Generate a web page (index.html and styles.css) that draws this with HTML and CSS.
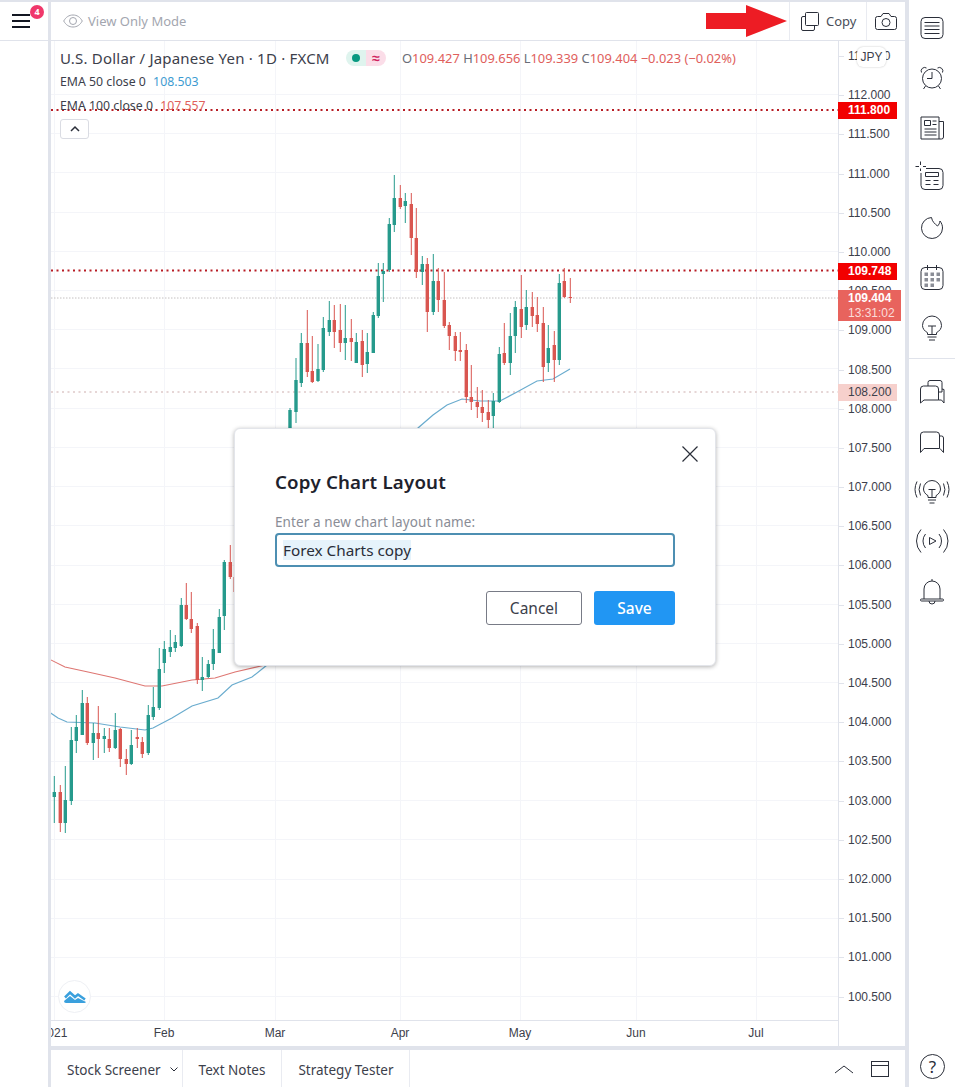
FILE: index.html
```html
<!DOCTYPE html>
<html lang="en">
<head>
    <meta charset="UTF-8">
    <meta name="viewport" content="width=device-width, initial-scale=1.0">
    <title>Forex Charts</title>
    <link rel="stylesheet" href="styles.css">
</head>
<body>
    <div class="app">
        <!-- Left rail with the menu button -->
        <div class="left-rail">
            <div class="menu-cell">
                <svg class="menu-icon" width="18" height="14" viewBox="0 0 18 14"><path d="M0 1h18M0 7h18M0 13h18"/></svg>
                <span class="menu-badge">4</span>
            </div>
        </div>

        <div class="center">
            <!-- Top toolbar -->
            <div class="toolbar">
                <div class="view-only">
                    <svg width="20" height="14" viewBox="0 0 20 14" class="eye"><path d="M.7 7C3 3 6 1 10 1s7 2 9.300 6c-2.300 4-5.300 6-9.300 6S3 11 .7 7z"/><circle cx="10" cy="7" r="3.500"/></svg>
                    <span>View Only Mode</span>
                </div>
                <svg class="red-arrow" width="81" height="32" viewBox="0 0 81 32"><path d="M0 8h40V0l41 16-41 16v-8H0z"/></svg>
                <div class="tool-btn copy-btn">
                    <svg width="18" height="19" viewBox="0 0 18 19" class="line-icon"><rect x="4.500" y=".5" width="13" height="13" rx="1"/><path d="M4.500 4.500H2A1.500 1.500 0 0 0 .5 6v11A1.500 1.500 0 0 0 2 18.500h10a1.500 1.500 0 0 0 1.500-1.500v-3"/></svg>
                    <span>Copy</span>
                </div>
                <div class="tool-btn camera-btn">
                    <svg width="22" height="17" viewBox="0 0 22 17" class="line-icon"><path d="M2.500 3.500H6L8 .5h6l2 3h3.500a2 2 0 0 1 2 2v9a2 2 0 0 1-2 2h-17a2 2 0 0 1-2-2v-9a2 2 0 0 1 2-2z"/><circle cx="11" cy="9.500" r="4"/></svg>
                </div>
            </div>

            <!-- Chart and price scale -->
            <div class="chart-row">
                <div class="chart-pane">
                    <svg class="chart" width="787" height="979" viewBox="51 41 787 979">
                        <!-- grid -->
                        <path class="grid" d="M51 94.500H838M51 133.500H838M51 172.500H838M51 212.500H838M51 251.500H838M51 290.500H838M51 329.500H838M51 368.500H838M51 408.500H838M51 447.500H838M51 486.500H838M51 525.500H838M51 565.500H838M51 604.500H838M51 643.500H838M51 682.500H838M51 722.500H838M51 761.500H838M51 800.500H838M51 839.500H838M51 879.500H838M51 918.500H838M51 957.500H838M51 996.500H838"/>
                        <path class="grid" d="M54.500 41V1020M164.500 41V1020M275.500 41V1020M400.500 41V1020M520.500 41V1020M636.500 41V1020M756.500 41V1020"/>
                        <!-- horizontal levels -->
                        <path class="level level-red" d="M51 110H838M51 270.500H838"/>
                        <path class="level level-last" d="M51 298H838"/>
                        <path class="level level-soft" d="M51 392H838"/>
                        <!-- EMA lines -->
                        <polyline class="ema ema-blue" points="49,712 58,718 67,722 95,723 120,727 145,730 153,728 172,718 192,706 218,698 232,685 252,677 267,665 418,428 433,415 447,405 462,399 480,401 500,401 517,392 537,381 553,379 570,369"/>
                        <polyline class="ema ema-red" points="49,659 65,667 88,672 115,678 145,686 162,686 192,680 215,678 235,672 265,665"/>
                        <!-- candles: wicks then bodies, up and down -->
                        <path class="wick up" d="M54.300 776V823M65.300 766V833M71.300 727V805M76.300 715V753M82.300 690V735M93.300 723V760M104.300 728V753M115.300 713V749M131.300 730V765M148.300 705V755M153.300 687V720M159.300 648V710M164.300 641V673M170.300 630V657M175.300 635V652M181.300 598V647M202.300 657V691M208.300 660V678M213.300 629V670M219.300 609V653M224.300 560V630M290 408V430M296 358V423M301.300 333V387M318 344V382M323.300 317V372M329.300 301V336M345.300 305V360M356.300 333V363M367.300 333V373M373.300 312V353M378.300 263V318M383.300 263V302M389.300 218V272M394.300 175V232M405.300 193V223M422.300 256V285M433.300 254V315M493.300 393V428M499.300 347V403M510.300 313V375M515.300 301V353M526.300 290V330M548.300 325V372M559.300 274V365"/>
                        <path class="wick down" d="M60.300 785V832M87.300 697V745M98.300 706V758M109.300 728V752M120.300 728V767M126.300 749V775M137.300 728V748M142.300 737V758M186.300 583V620M191.300 592V633M197.300 623V684M230.300 545V579M234 577V592M307.300 310V377M312.300 336V383M334.300 305V348M340.300 304V352M351.300 319V361M362.300 330V377M400.300 185V209M411.300 193V255M416.300 208V278M427.300 258V332M438.300 268V312M444.300 272V328M449.300 322V350M455.300 332V361M460.300 332V361M466.300 344V403M471.300 365V410M477.300 387V418M482.300 390V422M488.300 400V428M504.300 323V365M521.300 275V338M532.300 292V327M537.300 297V332M543.300 307V382M554.300 331V382M564.300 268V298M570.300 278V303"/>
                        <path class="body up" d="M54.300 792V797M65.300 800V823M71.300 740V801M76.300 727V741M82.300 703V735M93.300 733V743M104.300 736V739M115.300 730V748M131.300 745V764M148.300 715V753M153.300 707V717M159.300 669V708M164.300 649V663M170.300 647V652M175.300 642V648M181.300 605V646M202.300 677V680M208.300 664V677M213.300 649V664M219.300 617V653M224.300 562V616M290 410V430M296 380V412M301.300 343V383M318 369V381M323.300 328V370M329.300 320V332M345.300 338V343M356.300 342V363M367.300 352V364M373.300 315V353M378.300 276V316M383.300 271V274M389.300 224V270M394.300 198V225M405.300 201V206M422.300 264V272M433.300 281V312M493.300 401V416M499.300 354V402M510.300 336V363M515.300 307V336M526.300 307V325M548.300 348V363M559.300 283V360"/>
                        <path class="body down" d="M60.300 792V823M87.300 703V743M98.300 733V739M109.300 739V748M120.300 729V759M126.300 759V764M137.300 737V739M142.300 742V754M186.300 605V619M191.300 619V629M197.300 626V680M230.300 562V577M307.300 343V372M312.300 371V382M334.300 320V332M340.300 330V343M351.300 338V342M362.300 341V365M400.300 198V207M411.300 204V238M416.300 238V272M427.300 264V312M438.300 281V300M444.300 300V326M449.300 325V336M455.300 336V351M460.300 350V352M466.300 350V397M471.300 397V402M477.300 402V407M482.300 407V413M488.300 412V420M504.300 353V363M521.300 309V327M532.300 307V316M537.300 315V324M543.300 323V367M554.300 345V360M564.300 281V297M570.300 297V298"/>
                    </svg>

                    <!-- Legend over the chart -->
                    <div class="legend">
                        <div class="legend-title">
                            <span class="symbol">U.S. Dollar / Japanese Yen · 1D · FXCM</span>
                            <span class="status">
                                <span class="status-open"><i></i></span>
                                <span class="status-delay">≈</span>
                            </span>
                            <span class="ohlc"><b>O</b>109.427 <b>H</b>109.656 <b>L</b>109.339 <b>C</b>109.404 −0.023 (−0.02%)</span>
                        </div>
                        <div class="legend-row">EMA 50 close 0 <span class="val-blue">108.503</span></div>
                        <div class="legend-row">EMA 100 close 0 <span class="val-red">107.557</span></div>
                        <button class="collapse-btn">
                            <svg width="10" height="6" viewBox="0 0 10 6"><path d="M1 5l4-4 4 4"/></svg>
                        </button>
                    </div>

                    <div class="tv-logo">
                        <svg width="22" height="13" viewBox="0 0 22 13"><path class="tv-logo-ridge" d="M1 7.500L6 2.500l5 4.500 3-2.500 7 5"/><path d="M0 11l6-5 5 4 3-2 8 4v0a2 2 0 0 1-2 1H2a2 2 0 0 1-2-2z"/></svg>
                    </div>

                    <div class="time-axis">
                        <span style="left:3px">2021</span>
                        <span style="left:113px">Feb</span>
                        <span style="left:224px">Mar</span>
                        <span style="left:349px">Apr</span>
                        <span style="left:469px">May</span>
                        <span style="left:585px">Jun</span>
                        <span style="left:705px">Jul</span>
                    </div>
                </div>

                <div class="price-axis">
                    <div class="prices">
                        <div class="price">112.500</div>
                        <div class="price">112.000</div>
                        <div class="price">111.500</div>
                        <div class="price">111.000</div>
                        <div class="price">110.500</div>
                        <div class="price">110.000</div>
                        <div class="price">109.500</div>
                        <div class="price">109.000</div>
                        <div class="price">108.500</div>
                        <div class="price">108.000</div>
                        <div class="price">107.500</div>
                        <div class="price">107.000</div>
                        <div class="price">106.500</div>
                        <div class="price">106.000</div>
                        <div class="price">105.500</div>
                        <div class="price">105.000</div>
                        <div class="price">104.500</div>
                        <div class="price">104.000</div>
                        <div class="price">103.500</div>
                        <div class="price">103.000</div>
                        <div class="price">102.500</div>
                        <div class="price">102.000</div>
                        <div class="price">101.500</div>
                        <div class="price">101.000</div>
                        <div class="price">100.500</div>
                    </div>
                    <div class="currency">JPY</div>
                    <div class="tag tag-high">111.800</div>
                    <div class="tag tag-mid">109.748</div>
                    <div class="tag tag-last">109.404<small>13:31:02</small></div>
                    <div class="tag tag-low">108.200</div>
                </div>
            </div>

            <!-- Bottom tabs -->
            <div class="bottom-bar">
                <div class="tab">Stock Screener
                    <svg width="8" height="5" viewBox="0 0 8 5" class="tab-caret"><path d="M.5.5L4 4 7.500.5"/></svg>
                </div>
                <div class="tab">Text Notes</div>
                <div class="tab">Strategy Tester</div>
                <div class="bottom-actions">
                    <svg width="20" height="10" viewBox="0 0 20 10" class="line-icon"><path d="M1 9l9-7 9 7"/></svg>
                    <svg width="18" height="16" viewBox="0 0 18 16" class="line-icon"><rect x=".5" y=".5" width="17" height="15"/><path d="M.5 4.500h17"/></svg>
                </div>
            </div>
        </div>

        <!-- Right rail icons -->
        <div class="right-rail">
            <div class="rail-group">
                <div class="rail-btn"><svg width="28" height="28" viewBox="0 0 28 28"><rect x="3" y="3.500" width="22" height="21" rx="4"/><path d="M6.500 8.500h15M6.500 12h15M6.500 15.500h15M6.500 19.500h15"/></svg></div>
                <div class="rail-btn"><svg width="28" height="28" viewBox="0 0 28 28"><circle cx="14" cy="14.500" r="9.500"/><path d="M14 8v6.500H9M3.500 8.500a3.500 3.500 0 0 1 5-4.500M24.500 8.500a3.500 3.500 0 0 0-5-4.500M7.500 22l-2 3M20.500 22l2 3"/></svg></div>
                <div class="rail-btn"><svg width="28" height="28" viewBox="0 0 28 28"><path d="M21 7.500h4.500V23a2 2 0 0 1-2 2H3V3h18v22"/><path d="M6.500 6.500h6v5h-6zM14.500 7h4M14.500 10.500h4M6.500 15h12M6.500 18h12M6.500 21h12"/></svg></div>
                <div class="rail-btn"><svg width="28" height="28" viewBox="0 0 28 28"><path d="M8 4.500h13a4 4 0 0 1 4 4v13a4 4 0 0 1-4 4H7a4 4 0 0 1-4-4V9"/><path d="M7.500 8.500h13v4h-13zM7.500 16.500h5M15.500 16.500h5M7.500 20.500h5M15.500 20.500h5M-2.500 2.500H1M5 2.500h3M2.500-2.500V1M2.500 4.500V7"/></svg></div>
                <div class="rail-btn"><svg width="28" height="28" viewBox="0 0 28 28"><path d="M13.500 3.500A10.500 10.500 0 1 0 24.500 14c0-2.500-.8-4.800-2.500-7-.5 2.500-1 3.500-2.500 5-2.500-2-5.500-4.500-6-8.500z"/></svg></div>
                <div class="rail-btn"><svg width="28" height="28" viewBox="0 0 28 28"><rect x="3" y="3.500" width="22" height="22" rx="4"/><path d="M9.500 1v5M18.500 1v5"/><g class="dots"><rect x="6.500" y="8.500" width="3.500" height="3.500"/><rect x="12.500" y="8.500" width="3.500" height="3.500"/><rect x="18.500" y="8.500" width="3.500" height="3.500"/><rect x="6.500" y="14" width="3.500" height="3.500"/><rect x="12.500" y="14" width="3.500" height="3.500"/><rect x="18.500" y="14" width="3.500" height="3.500"/><rect x="6.500" y="19.500" width="3.500" height="3.500"/><rect x="12.500" y="19.500" width="3.500" height="3.500"/></g></svg></div>
                <div class="rail-btn"><svg width="28" height="28" viewBox="0 0 28 28"><path d="M9.500 20.500v-1.800C6.500 17 4.500 14.500 4.500 11.500a9.500 9.500 0 0 1 19 0c0 3-2 5.500-5 7.200v1.800zM10 12h8M14 12v8.500M9.500 23h9M11 26h6"/></svg></div>
            </div>
            <div class="rail-group rail-group-lower">
                <div class="rail-btn"><svg width="28" height="28" viewBox="0 0 28 28"><path d="M6 23l-3.500 3V12a3 3 0 0 1 3-3h12a3 3 0 0 1 3 3v11z"/><path d="M10 9V5.500a2 2 0 0 1 2-2h10a2 2 0 0 1 2 2V15h-3.500M20.500 23h3l2.500 3V12.500l-2-.5"/></svg></div>
                <div class="rail-btn"><svg width="28" height="28" viewBox="0 0 28 28"><path d="M6 21.500l-3.500 4V8a3 3 0 0 1 3-3h13a3 3 0 0 1 3 3v13.500z"/><path d="M22 9h1.500a2 2 0 0 1 2 2v14.500l-3.500-4"/></svg></div>
                <div class="rail-btn"><svg width="28" height="28" viewBox="0 0 28 28"><path d="M10 20.500v-1.800c-2.700-1.600-4.500-4-4.500-6.700a8.500 8.500 0 0 1 17 0c0 2.700-1.800 5.100-4.500 6.700v1.800zM10.500 12.500h7M14 12.500v8M10 23h8M11.500 26h5M2.500 6.500a14 14 0 0 0 0 12M25.500 6.500a14 14 0 0 1 0 12M-1 4.500a18 18 0 0 0 0 16M29 4.500a18 18 0 0 1 0 16"/></svg></div>
                <div class="rail-btn"><svg width="28" height="28" viewBox="0 0 28 28"><path d="M11.500 10.500v7l6.500-3.500zM7.500 7a11 11 0 0 0 0 14M21 7a11 11 0 0 1 0 14M3 2.500a17 17 0 0 0 0 23M25.500 2.500a17 17 0 0 1 0 23"/></svg></div>
                <div class="rail-btn"><svg width="28" height="28" viewBox="0 0 28 28"><path d="M6 22V12a8 8 0 0 1 16 0v10M14 2v2M3.500 22h21a1 1 0 0 1 0 2h-21a1 1 0 0 1 0-2zM11 24a3 3 0 0 0 6 0"/></svg></div>
            </div>
            <div class="help">?</div>
        </div>

        <!-- Copy layout dialog -->
        <div class="dialog">
            <svg class="dialog-close" width="16" height="16" viewBox="0 0 16 16"><path d="M.5.500l15 15M15.500.500l-15 15"/></svg>
            <h3>Copy Chart Layout</h3>
            <div class="field-label">Enter a new chart layout name:</div>
            <div class="field"><span>Forex Charts copy</span></div>
            <div class="dialog-actions">
                <button class="btn-cancel">Cancel</button>
                <button class="btn-save">Save</button>
            </div>
        </div>
    </div>
</body>
</html>
```

FILE: styles.css
```css
* {
    box-sizing: border-box;
}
body {
    font-family: "Noto Sans", Arial, sans-serif;
    background-color: #ffffff;
    margin: 0;
    color: #131722;
    overflow: hidden;
}
.app {
    position: relative;
    display: flex;
    width: 955px;
    height: 1087px;
}
svg {
    overflow: visible;
}
.line-icon,
.rail-btn svg,
.menu-icon,
.tab-caret,
.collapse-btn svg {
    fill: none;
    stroke: #2a2e39;
    stroke-width: 1;
}

/* Left rail */
.left-rail {
    width: 48px;
    border-top: 2px solid #e0e3eb;
    flex-shrink: 0;
}
.menu-cell {
    position: relative;
    height: 39px;
    border-bottom: 1px solid #e0e3eb;
    padding: 12px 0 0 12px;
}
.menu-icon {
    display: block;
    stroke: #131722;
    stroke-width: 2;
}
.menu-badge {
    position: absolute;
    left: 30px;
    top: 3px;
    width: 14px;
    height: 14px;
    border-radius: 50%;
    background-color: #f0386b;
    color: #ffffff;
    font-size: 9px;
    font-weight: bold;
    line-height: 14px;
    text-align: center;
}

/* Center column */
.center {
    display: flex;
    flex-direction: column;
    width: 861px;
    border-left: 3px solid #e0e3eb;
    border-right: 4px solid #e0e3eb;
    flex-shrink: 0;
}
.toolbar {
    display: flex;
    align-items: center;
    height: 41px;
    border-top: 2px solid #e0e3eb;
    border-bottom: 1px solid #e0e3eb;
    flex-shrink: 0;
}
.view-only {
    display: flex;
    align-items: center;
    gap: 5px;
    margin-left: 12px;
    font-size: 13px;
    color: #a3a6af;
}
.eye {
    fill: none;
    stroke: #a3a6af;
    stroke-width: 1;
}
.red-arrow {
    margin-left: auto;
    margin-right: 2px;
    fill: #ed1c24;
}
.tool-btn {
    display: flex;
    align-items: center;
    height: 100%;
    border-left: 1px solid #e9ebf1;
    font-size: 13px;
    color: #4a4e59;
}
.copy-btn {
    width: 77px;
    gap: 7px;
    padding-left: 11px;
}
.camera-btn {
    width: 39px;
    padding-left: 8px;
}

/* Chart */
.chart-row {
    display: flex;
    flex: 1;
    min-height: 0;
}
.chart-pane {
    position: relative;
    width: 787px;
    display: flex;
    flex-direction: column;
    overflow: hidden;
}
.chart {
    display: block;
    flex-shrink: 0;
    overflow: hidden;
}
.grid {
    fill: none;
    stroke: #f4f5f9;
    stroke-width: 1;
}
.level {
    fill: none;
    stroke-width: 2;
    stroke-dasharray: 2 3.5;
}
.level-red {
    stroke: #b81c24;
}
.level-last {
    stroke: #c4c0c0;
    stroke-width: 1;
    stroke-dasharray: 1.500 1.500;
}
.level-soft {
    stroke: #e6d6d6;
}
.ema {
    fill: none;
    stroke-width: 1.200;
}
.ema-blue {
    stroke: #6aacce;
}
.ema-red {
    stroke: #de7672;
    stroke-width: 1.100;
}
.wick {
    fill: none;
    stroke-width: 1;
}
.body {
    fill: none;
    stroke-width: 3.400;
}
.up {
    stroke: #269a8c;
}
.down {
    stroke: #d95650;
}
.legend {
    position: absolute;
    left: 9px;
    top: 6px;
    font-size: 12.300px;
    color: #3c404b;
}
.legend-title {
    display: flex;
    align-items: center;
    height: 22px;
}
.symbol {
    font-size: 15px;
    width: 286px;
    letter-spacing: 0.2px;
    white-space: nowrap;
}
.status {
    display: flex;
    width: 40px;
    height: 16px;
}
.status-open {
    display: flex;
    align-items: center;
    justify-content: center;
    width: 20px;
    background-color: #dff4ee;
    border-radius: 8px 0 0 8px;
}
.status-open i {
    width: 8px;
    height: 8px;
    border-radius: 50%;
    background-color: #089981;
}
.status-delay {
    width: 20px;
    background-color: #fbdde8;
    border-radius: 0 8px 8px 0;
    color: #d0215f;
    font-size: 14px;
    font-weight: bold;
    line-height: 16px;
    text-align: center;
}
.ohlc {
    margin-left: 16px;
    font-size: 12.900px;
    color: #e0605c;
    white-space: nowrap;
}
.ohlc b {
    font-weight: normal;
    color: #6a6d78;
}
.legend-row {
    height: 24px;
    line-height: 24px;
    padding-top: 1px;
}
.val-blue {
    margin-left: 4px;
    color: #3d9bd1;
}
.val-red {
    margin-left: 4px;
    color: #e0605c;
}
.collapse-btn {
    display: flex;
    align-items: center;
    justify-content: center;
    width: 29px;
    height: 20px;
    margin-top: 2px;
    padding: 0;
    background-color: #ffffff;
    border: 1px solid #dadce3;
    border-radius: 3px;
}
.collapse-btn svg {
    stroke-width: 1.500;
}
.tv-logo {
    position: absolute;
    left: 7px;
    top: 939px;
    display: flex;
    align-items: center;
    justify-content: center;
    width: 33px;
    height: 33px;
    border-radius: 50%;
    background-color: #ffffff;
    border: 1px solid #eef0f4;
}
.tv-logo svg {
    fill: #3aa0dd;
}
.tv-logo-ridge {
    fill: none;
    stroke: #3aa0dd;
    stroke-width: 2.500;
}
.time-axis {
    position: relative;
    height: 26px;
    border-top: 1px solid #e0e3eb;
    font-family: "Liberation Sans", Arial, sans-serif;
    font-size: 12px;
    color: #3c404b;
}
.time-axis span {
    position: absolute;
    top: 5px;
    transform: translateX(-50%);
}

/* Price scale */
.price-axis {
    position: relative;
    flex: 1;
    border-left: 1px solid #e0e3eb;
    font-family: "Liberation Sans", Arial, sans-serif;
    font-size: 12px;
    color: #3c404b;
}
.prices {
    height: 100%;
    margin-top: -4px;
}
.price {
    position: relative;
    height: 39.200px;
    line-height: 39.200px;
    padding-left: 9px;
}
.price::before {
    content: "";
    position: absolute;
    left: 0;
    top: 19px;
    width: 5px;
    height: 1px;
    background-color: #e0e3eb;
}
.currency {
    position: absolute;
    left: 18px;
    top: 6px;
    width: 29px;
    height: 20px;
    background-color: #ffffff;
    border-radius: 6px;
    box-shadow: 0 0 2px rgba(0, 0, 0, 0.25);
    line-height: 20px;
    text-align: center;
}
.tag {
    position: absolute;
    left: -1px;
    width: 59px;
    padding-left: 10px;
    font-size: 12px;
    line-height: 17px;
    color: #ffffff;
    font-weight: bold;
}
.tag-high {
    top: 61px;
    background-color: #f20000;
}
.tag-mid {
    top: 222px;
    background-color: #f20000;
}
.tag-last {
    top: 249px;
    width: 63px;
    height: 31px;
    background-color: #e8635d;
    line-height: 16px;
}
.tag-last small {
    display: block;
    font-size: 12px;
    font-weight: normal;
    line-height: 14px;
    color: #fbdcda;
}
.tag-low {
    top: 343px;
    background-color: #f6d0cc;
    color: #3c404b;
    font-weight: normal;
}

/* Bottom bar */
.bottom-bar {
    display: flex;
    height: 41px;
    border-top: 4px solid #e0e3eb;
    flex-shrink: 0;
    font-size: 13.500px;
    color: #3c404b;
}
.tab {
    display: flex;
    align-items: center;
    padding: 2px 16px 0;
    border-right: 1px solid #e9ebf1;
    white-space: nowrap;
}
.tab-caret {
    margin: 0 -12px 0 9px;
}
.bottom-actions {
    display: flex;
    align-items: center;
    gap: 17px;
    margin-left: auto;
    margin-right: 16px;
}

/* Right rail */
.right-rail {
    display: flex;
    flex-direction: column;
    flex: 1;
    padding-top: 3px;
}
.rail-group {
    padding-bottom: 5px;
    border-bottom: 1px solid #e0e3eb;
}
.rail-group-lower {
    padding-top: 7px;
    border-bottom: none;
}
.rail-btn {
    display: flex;
    align-items: center;
    justify-content: center;
    height: 50px;
}
.rail-btn .dots rect {
    fill: #8a8d96;
    stroke: none;
}
.help {
    width: 25px;
    height: 25px;
    margin: auto 0 8px 11px;
    border: 1px solid #2a2e39;
    border-radius: 50%;
    font-size: 17px;
    line-height: 23px;
    text-align: center;
    color: #2a2e39;
}

/* Dialog */
.dialog {
    position: absolute;
    left: 234px;
    top: 428px;
    width: 482px;
    height: 238px;
    padding: 40px 40px 0 40px;
    background-color: #ffffff;
    border: 1px solid #e3e5ea;
    border-radius: 6px;
    box-shadow: 0 1px 4px rgba(0, 0, 0, 0.3);
}
.dialog-close {
    position: absolute;
    right: 17px;
    top: 17px;
    fill: none;
    stroke: #2a2e39;
    stroke-width: 1.200;
}
.dialog h3 {
    margin: 0;
    font-size: 18.700px;
    line-height: 26px;
    font-weight: 600;
    letter-spacing: 0.2px;
    color: #1e222d;
}
.field-label {
    margin-top: 19px;
    font-size: 13.500px;
    letter-spacing: 0.1px;
    line-height: 17px;
    color: #8a8d96;
}
.field {
    height: 34px;
    margin-top: 2px;
    padding-left: 6px;
    border: 2px solid #4d8fb2;
    border-radius: 4px;
    font-size: 15.300px;
    line-height: 30px;
    color: #2a2e39;
}
.field span {
    background-color: #e6f3fb;
}
.dialog-actions {
    display: flex;
    justify-content: flex-end;
    gap: 12px;
    margin-top: 24px;
}
.dialog-actions button {
    height: 34px;
    padding: 0;
    border-radius: 3px;
    font-family: inherit;
    font-size: 15.500px;
}
.btn-cancel {
    width: 96px;
    background-color: #ffffff;
    border: 1px solid #787b86;
    color: #3c404b;
}
.btn-save {
    width: 81px;
    background-color: #2196f3;
    border: none;
    color: #ffffff;
    font-weight: 500;
}
```
